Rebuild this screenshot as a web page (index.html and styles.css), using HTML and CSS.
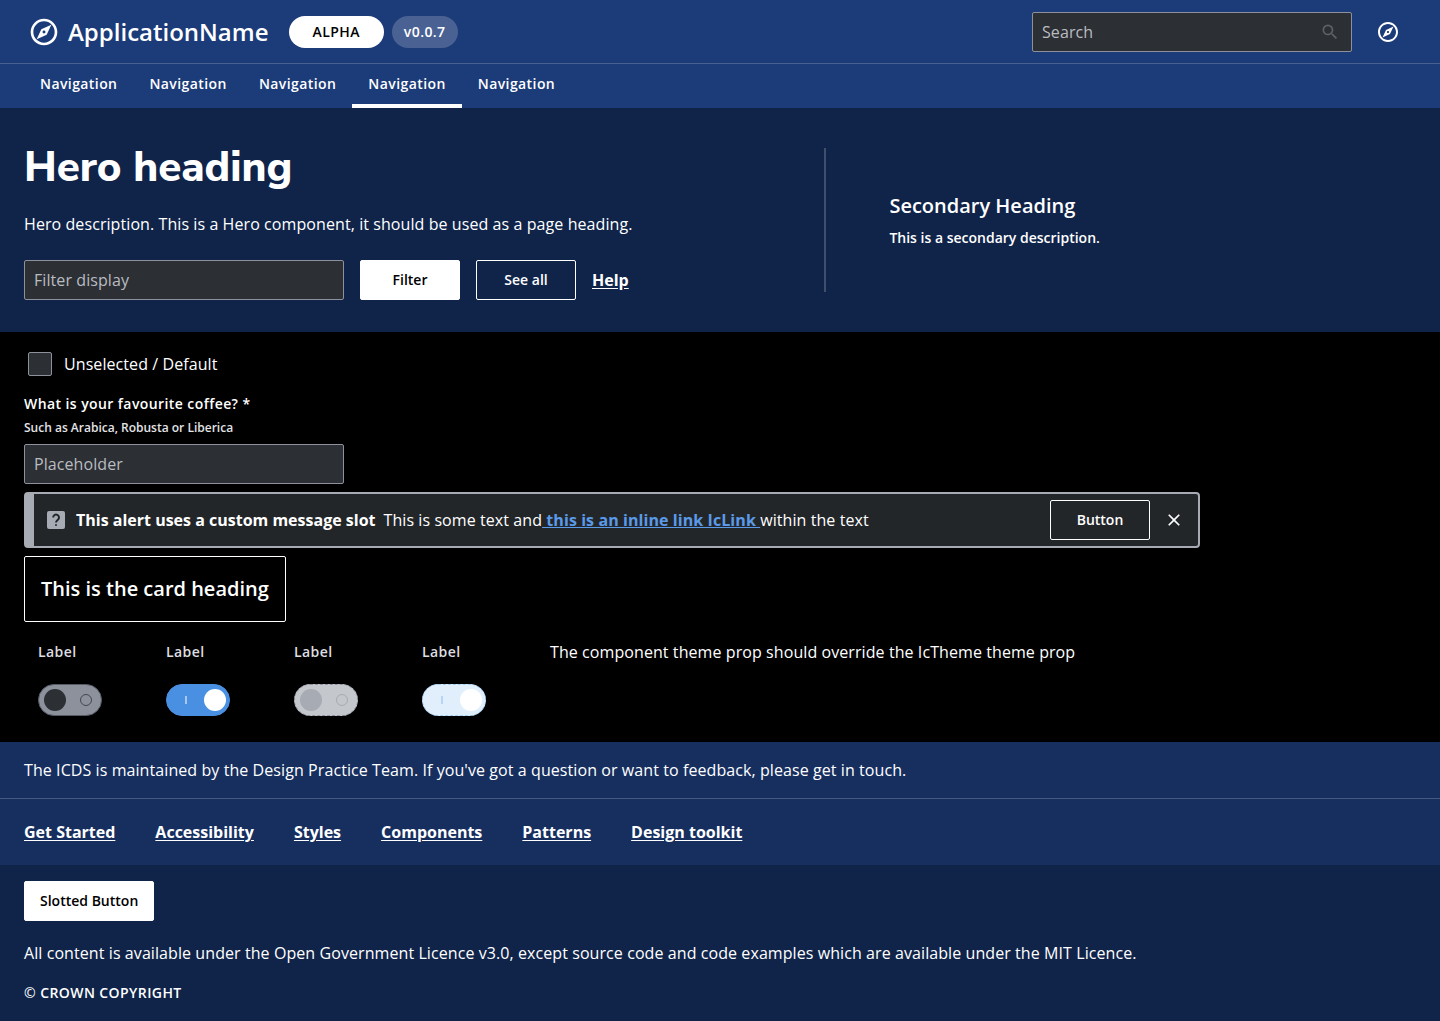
FILE: index.html
```html
<!DOCTYPE html>
<html lang="en">
<head>
<meta charset="utf-8">
<meta name="viewport" content="width=device-width, initial-scale=1">
<title>ApplicationName</title>
<link rel="stylesheet" href="styles.css">
</head>
<body>
<svg class="sprite" aria-hidden="true">
  <symbol id="compass" viewBox="0 0 24 24"><path d="M12 2C6.48 2 2 6.48 2 12s4.48 10 10 10 10-4.48 10-10S17.52 2 12 2zm0 18c-4.41 0-8-3.59-8-8s3.59-8 8-8 8 3.59 8 8-3.59 8-8 8zm-5.500-2.500l7.510-3.490L17.500 6.500 9.990 9.990 6.500 17.500zm5.500-6.600c.61 0 1.100.49 1.100 1.100s-.49 1.100-1.100 1.100-1.100-.49-1.100-1.100.49-1.100 1.100-1.100z"/></symbol>
</svg>
<header class="top">
  <div class="top-bar">
    <a class="brand" href="#"><svg class="brand-icon" aria-hidden="true"><use href="#compass"/></svg><span>ApplicationName</span></a>
    <span class="tag tag-status">ALPHA</span>
    <span class="tag tag-version">v0.0.7</span>
    <form class="search" role="search">
      <input class="field search-field" type="search" placeholder="Search" aria-label="Search">
      <button class="search-button" type="button" aria-label="Submit search"><svg viewBox="0 0 24 24" aria-hidden="true"><path d="M15.500 14h-.79l-.28-.27A6.471 6.471 0 0 0 16 9.500 6.500 6.500 0 1 0 9.500 16c1.610 0 3.090-.59 4.230-1.570l.27.28v.79l5 4.990L20.490 19l-4.990-5zm-6 0C7.010 14 5 11.990 5 9.500S7.010 5 9.500 5 14 7.010 14 9.500 11.990 14 9.500 14z"/></svg></button>
    </form>
    <button class="icon-button" type="button" aria-label="Explore"><svg aria-hidden="true"><use href="#compass"/></svg></button>
  </div>
  <nav class="nav" aria-label="Main">
    <a href="#">Navigation</a>
    <a href="#">Navigation</a>
    <a href="#">Navigation</a>
    <a class="current" href="#" aria-current="page">Navigation</a>
    <a href="#">Navigation</a>
  </nav>
</header>
<section class="hero">
  <div>
    <h1>Hero heading</h1>
    <p class="hero-text">Hero description. This is a Hero component, it should be used as a page heading.</p>
    <div class="hero-actions">
      <input class="field" type="text" placeholder="Filter display" aria-label="Filter display">
      <button class="button button-primary" type="button">Filter</button>
      <button class="button" type="button">See all</button>
      <a class="link" href="#">Help</a>
    </div>
  </div>
  <div class="hero-aside">
    <h2>Secondary Heading</h2>
    <p>This is a secondary description.</p>
  </div>
</section>
<main class="content">
  <label class="check"><input type="checkbox"><span>Unselected / Default</span></label>
  <div class="question">
    <label for="coffee">What is your favourite coffee? *</label>
    <span class="helper" id="coffee-help">Such as Arabica, Robusta or Liberica</span>
    <input class="field" id="coffee" type="text" placeholder="Placeholder" aria-describedby="coffee-help">
  </div>
  <div class="alert" role="status">
    <svg class="alert-icon" viewBox="0 0 24 24" aria-hidden="true"><rect x="3" y="3" width="18" height="18" rx="2"/><path class="mark" d="M9.200 9.500a2.900 2.900 0 1 1 4.700 2.200c-1.100.9-1.900 1.400-1.900 2.800"/><circle class="dot" cx="12" cy="17" r="1"/></svg>
    <strong>This alert uses a custom message slot</strong>
    <p>This is some text and<a class="inline-link" href="#"> this is an inline link IcLink </a>within the text</p>
    <button class="button" type="button">Button</button>
    <button class="close" type="button" aria-label="Dismiss"><svg viewBox="0 0 24 24" aria-hidden="true"><path d="M19 6.410L17.590 5 12 10.590 6.410 5 5 6.410 10.590 12 5 17.590 6.410 19 12 13.410 17.590 19 19 17.590 13.410 12z"/></svg></button>
  </div>
  <article class="card"><h2>This is the card heading</h2></article>
  <div class="switches">
    <label class="switch"><span>Label</span><input type="checkbox" role="switch"></label>
    <label class="switch"><span>Label</span><input type="checkbox" role="switch" checked></label>
    <label class="switch"><span>Label</span><input type="checkbox" role="switch" disabled></label>
    <label class="switch"><span>Label</span><input type="checkbox" role="switch" checked disabled></label>
    <p>The component theme prop should override the IcTheme theme prop</p>
  </div>
</main>
<footer class="footer">
  <p class="footer-about">The ICDS is maintained by the Design Practice Team. If you've got a question or want to feedback, please get in touch.</p>
  <nav class="footer-links" aria-label="Footer">
    <a class="link" href="#">Get Started</a>
    <a class="link" href="#">Accessibility</a>
    <a class="link" href="#">Styles</a>
    <a class="link" href="#">Components</a>
    <a class="link" href="#">Patterns</a>
    <a class="link" href="#">Design toolkit</a>
  </nav>
  <div class="footer-legal">
    <button class="button button-primary" type="button">Slotted Button</button>
    <p>All content is available under the Open Government Licence v3.0, except source code and code examples which are available under the MIT Licence.</p>
    <p class="copyright"><span class="copyright-sign">©</span> CROWN COPYRIGHT</p>
  </div>
</footer>
</body>
</html>
```
FILE: styles.css
```css
:root {
  --brand: #1c3b79;
  --brand-mid: #172f5f;
  --brand-dark: #10244a;
  --field: #2c2f34;
  --muted: #a7abb3;
  --label-spacing: 0.03em;
}

* {
  box-sizing: border-box;
}

body {
  margin: 0;
  min-height: 100vh;
  display: flex;
  flex-direction: column;
  background: #000;
  color: #fff;
  font: 400 16px/24px "Open Sans", sans-serif;
  letter-spacing: 0.005em;
}

h1, h2, p {
  margin: 0;
}

h1, h2, strong {
  letter-spacing: normal;
}

button, input {
  font: inherit;
  margin: 0;
}

input {
  letter-spacing: inherit;
}

svg {
  display: block;
  fill: currentColor;
}

.sprite {
  position: absolute;
  width: 0;
  height: 0;
}

/* Shared controls */
.field {
  width: 320px;
  height: 40px;
  padding: 0 9px;
  border: 1px solid #8c919c;
  border-radius: 2px;
  background: var(--field);
  color: #fff;
}

.field::placeholder {
  color: #b9bcc1;
  opacity: 1;
}

.button {
  min-width: 100px;
  height: 40px;
  padding: 0 15px;
  border: 1px solid #fff;
  border-radius: 2px;
  background: transparent;
  color: #fff;
  font-size: 14px;
  font-weight: 600;
}

.button-primary {
  background: #fff;
  color: #000;
}

.link {
  color: #fff;
  font-weight: 700;
  letter-spacing: normal;
  text-underline-offset: 2px;
}

/* Header */
.top {
  background: var(--brand);
}

.top-bar {
  display: flex;
  align-items: center;
  height: 64px;
  padding: 0 40px 0 28px;
  border-bottom: 1px solid #49618f;
}

.brand {
  display: flex;
  align-items: center;
  gap: 8px;
  margin-right: 20px;
  color: #fff;
  font-size: 24px;
  font-weight: 600;
  line-height: 32px;
  letter-spacing: normal;
  text-decoration: none;
}

.brand-icon {
  width: 32px;
  height: 32px;
}

.tag {
  height: 32px;
  border-radius: 16px;
  font-size: 14px;
  font-weight: 600;
  line-height: 32px;
  text-align: center;
  letter-spacing: var(--label-spacing);
}

.tag-status {
  padding: 0 24px;
  margin-right: 8px;
  background: #fff;
  color: #000;
}

.tag-version {
  padding: 0 12px;
  background: #4a6293;
}

.search {
  position: relative;
  margin-left: auto;
  margin-right: 24px;
}

.search-field {
  display: block;
  padding-right: 40px;
  appearance: none;
}

.search-button {
  position: absolute;
  top: 10px;
  right: 12px;
  padding: 0;
  border: 0;
  background: none;
  color: #5d6066;
}

.search-button svg {
  width: 20px;
  height: 20px;
}

.icon-button {
  padding: 0;
  border: 0;
  background: none;
  color: #fff;
}

.icon-button svg {
  width: 24px;
  height: 24px;
}

.nav {
  display: flex;
  padding: 0 24px;
}

.nav a {
  height: 44px;
  padding: 8px 16px;
  border-bottom: 4px solid transparent;
  color: #fff;
  font-size: 14px;
  font-weight: 600;
  letter-spacing: var(--label-spacing);
  text-decoration: none;
}

.nav .current {
  border-bottom-color: #fff;
}

/* Hero */
.hero {
  display: grid;
  grid-template-columns: 23fr 17fr;
  padding: 32px 24px;
  background: var(--brand-dark);
}

.hero h1 {
  font-family: "Nunito Sans", Nunito, Lato, "Open Sans", sans-serif;
  font-size: 42px;
  font-weight: 800;
  line-height: 56px;
}

.hero-text {
  margin: 16px 0 24px;
}

.hero-actions {
  display: flex;
  align-items: center;
  gap: 16px;
}

.hero-aside {
  display: flex;
  flex-direction: column;
  justify-content: center;
  gap: 8px;
  margin: 8px 0;
  padding: 4px 0 0 63px;
  border-left: 2px solid #414f6d;
}

.hero-aside h2 {
  font-size: 20px;
  font-weight: 600;
  line-height: 24px;
}

.hero-aside p {
  font-size: 14px;
  font-weight: 600;
  letter-spacing: normal;
}

/* Content */
.content {
  display: flex;
  flex-direction: column;
  align-items: flex-start;
  gap: 8px;
  padding: 16px 24px 26px;
}

.check {
  display: flex;
  align-items: center;
  gap: 12px;
  height: 32px;
  padding-left: 4px;
}

.check input {
  appearance: none;
  width: 24px;
  height: 24px;
  border: 1px solid #8c919c;
  border-radius: 2px;
  background: var(--field);
}

.question {
  display: flex;
  flex-direction: column;
  margin-top: 4px;
}

.question label {
  font-size: 14px;
  font-weight: 600;
  letter-spacing: var(--label-spacing);
}

.helper {
  margin-bottom: 4px;
  color: #e3e4e6;
  font-size: 12px;
  font-weight: 600;
  letter-spacing: normal;
}

.alert {
  display: flex;
  align-items: center;
  width: 100%;
  max-width: 1176px;
  min-height: 56px;
  padding: 6px 12px 6px 10px;
  border: 2px solid var(--muted);
  border-left-width: 10px;
  border-radius: 4px;
  background: #232629;
}

.alert-icon {
  width: 24px;
  height: 24px;
  margin-right: 8px;
  fill: var(--muted);
}

.alert-icon .mark {
  fill: none;
  stroke: #232629;
  stroke-width: 2;
}

.alert-icon .dot {
  fill: #232629;
}

.alert p {
  margin: 0 auto 0 8px;
}

.inline-link {
  color: #5a9ae8;
  font-weight: 700;
}

.close {
  margin-left: 12px;
  padding: 2px;
  border: 0;
  background: none;
  color: #fff;
}

.close svg {
  width: 20px;
  height: 20px;
}

.card {
  padding: 20px 16px;
  border: 1px solid #fff;
  border-radius: 2px;
}

.card h2 {
  font-size: 20px;
  font-weight: 600;
  line-height: 24px;
}

.switches {
  display: flex;
  gap: 64px;
  padding: 10px 14px 0;
}

.switch {
  display: flex;
  flex-direction: column;
  gap: 20px;
  color: #dddee0;
  font-size: 14px;
  font-weight: 600;
  letter-spacing: var(--label-spacing);
}

.switch input {
  appearance: none;
  display: flex;
  align-items: center;
  justify-content: space-between;
  width: 64px;
  height: 32px;
  padding: 0 9px 0 5px;
  border: 1px solid #565b66;
  border-radius: 16px;
  background: #8c919c;
  color: #43474f;
}

.switch input::before {
  content: "";
  width: 22px;
  height: 22px;
  border-radius: 50%;
  background: var(--field);
}

.switch input::after {
  content: "";
  width: 10px;
  height: 10px;
  border: 1px solid currentColor;
  border-radius: 50%;
}

.switch input:checked {
  flex-direction: row-reverse;
  padding: 0 3px 0 18px;
  border-color: #4a90e2;
  background: #4a90e2;
  color: #a5c8f1;
}

.switch input:checked::before {
  background: #fff;
}

.switch input:checked::after {
  width: 2px;
  height: 8px;
  border-width: 0 0 0 2px;
  border-radius: 0;
}

.switch input:disabled {
  border: 1px dashed #8c919c;
  background: #c4c7cc;
  color: #a7abb3;
}

.switch input:disabled::before {
  background: #a7abb3;
}

.switch input:checked:disabled {
  border-color: #a2cdf5;
  background: #e1effd;
  color: #b4d7f8;
}

.switch input:checked:disabled::before {
  background: #fff;
}

/* Footer */
.footer {
  flex: 1;
  display: flex;
  flex-direction: column;
  background: var(--brand-mid);
}

.footer-about {
  padding: 16px 24px;
  border-bottom: 1px solid #455981;
}

.footer-links {
  display: flex;
  flex-wrap: wrap;
  gap: 40px;
  padding: 21px 24px;
}

.footer-legal {
  flex: 1;
  display: flex;
  flex-direction: column;
  align-items: flex-start;
  padding: 16px 24px;
  background: var(--brand-dark);
}

.footer-legal p {
  margin-top: 20px;
}

.footer-legal .copyright {
  margin-top: 16px;
  font-size: 14px;
  font-weight: 600;
  letter-spacing: var(--label-spacing);
}

.copyright-sign {
  font-weight: 400;
}
```
